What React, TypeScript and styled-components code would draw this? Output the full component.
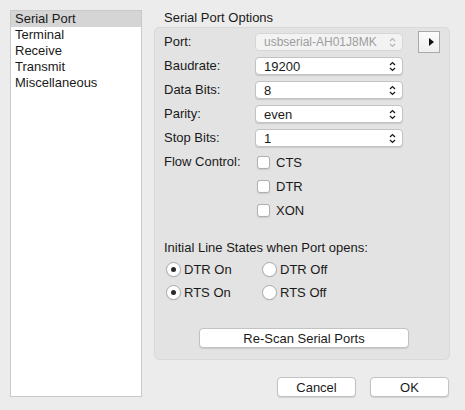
import React from "react";
import styled, { createGlobalStyle } from "styled-components";

const Global = createGlobalStyle`
  html, body { margin: 0; padding: 0; background: #ececec; }
  body { font-family: "Liberation Sans", Arial, sans-serif; font-size: 13px; color: #1a1a1a; }
  * { box-sizing: border-box; }
`;

const Window = styled.div`
  width: 465px;
  height: 410px;
  background: #ececec;
  padding: 10px 15px 0 10px;
  display: flex;
  gap: 12px;
`;

const Sidebar = styled.div`
  width: 132px;
  height: 387px;
  background: #fff;
  border: 1px solid #c9c9c9;
  display: flex;
  flex-direction: column;
`;

const SideItem = styled.div<{ $selected?: boolean }>`
  height: 16px;
  line-height: 16px;
  padding-left: 4px;
  background: ${(p) => (p.$selected ? "#d5d5d5" : "transparent")};
  white-space: nowrap;
`;

const Main = styled.div`
  width: 296px;
  display: flex;
  flex-direction: column;
`;

const Title = styled.div`
  height: 17px;
  line-height: 16px;
  padding-left: 10px;
  flex: none;
`;

const Group = styled.div`
  height: 333px;
  flex: none;
  background: #e3e3e3;
  border: 1px solid #d9d9d9;
  border-radius: 5px;
  padding: 5px 0 0 9px;
  display: flex;
  flex-direction: column;
`;

const FormGrid = styled.div`
  display: grid;
  grid-template-columns: 91px 148px 37px;
  row-gap: 6px;
  align-items: center;
`;

const Label = styled.div`
  height: 18px;
  line-height: 18px;
  white-space: nowrap;
`;

const Popup = styled.div<{ $disabled?: boolean }>`
  height: 18px;
  border-radius: 4px;
  background: ${(p) => (p.$disabled ? "#f3f3f3" : "#fff")};
  border: 1px solid ${(p) => (p.$disabled ? "#d6d6d6" : "#c3c3c3")};
  box-shadow: ${(p) => (p.$disabled ? "none" : "0 1px 1px rgba(0,0,0,0.12)")};
  color: ${(p) => (p.$disabled ? "#9d9d9d" : "#1a1a1a")};
  display: flex;
  align-items: center;
  justify-content: space-between;
  padding: 0 6px 0 8px;
  font-size: ${(p) => (p.$disabled ? "12px" : "13px")};
  white-space: nowrap;
`;

const ArrowButton = styled.div`
  justify-self: end;
  width: 22px;
  height: 22px;
  margin: -2px 0;
  border: 1px solid #a9a9a9;
  background: linear-gradient(#fbfbfb, #efefef);
  display: flex;
  align-items: center;
  justify-content: center;
  padding-left: 4px;
`;

const CheckRow = styled.div`
  height: 18px;
  display: flex;
  align-items: center;
  gap: 6px;
  padding-left: 2px;
`;

const Checkbox = styled.span`
  width: 13px;
  height: 13px;
  border-radius: 3px;
  background: #fff;
  border: 1px solid #b0b0b0;
  box-shadow: 0 0.5px 1px rgba(0,0,0,0.1);
`;

const Section = styled.div`
  margin-top: 21px;
  line-height: 16px;
  white-space: nowrap;
`;

const RadioGrid = styled.div`
  display: grid;
  grid-template-columns: 96px 100px;
  row-gap: 7px;
  margin-top: 5px;
  padding-left: 2px;
`;

const RadioItem = styled.div`
  display: flex;
  align-items: center;
  gap: 3px;
  height: 16px;
  white-space: nowrap;
`;

const Radio = styled.span<{ $on?: boolean }>`
  width: 15px;
  height: 15px;
  border-radius: 50%;
  background: #fff;
  border: 1px solid #ababab;
  box-shadow: 0 0.5px 1px rgba(0,0,0,0.1);
  display: flex;
  align-items: center;
  justify-content: center;
  &::after {
    content: "";
    width: 5px;
    height: 5px;
    border-radius: 50%;
    background: ${(p) => (p.$on ? "#2a2a2a" : "transparent")};
  }
`;

const PushButton = styled.div<{ $w: number }>`
  width: ${(p) => p.$w}px;
  height: 20px;
  border-radius: 4px;
  background: #fff;
  border: 1px solid #c2c2c2;
  box-shadow: 0 1px 1px rgba(0,0,0,0.12);
  display: flex;
  align-items: center;
  justify-content: center;
  white-space: nowrap;
`;

const RescanWrap = styled.div`
  margin-top: 28px;
  display: flex;
  justify-content: center;
  padding-right: 5px;
`;

const Footer = styled.div`
  margin-top: 17px;
  display: flex;
  justify-content: flex-end;
  gap: 14px;
  padding-right: 1px;
`;

const Chevrons = () => (
  <svg width="7" height="11" viewBox="0 0 7 11">
    <path d="M1 4 L3.5 1.5 L6 4 M1 7 L3.5 9.5 L6 7" fill="none" stroke="currentColor" strokeWidth="1.2" />
  </svg>
);

const Triangle = () => (
  <svg width="5" height="8" viewBox="0 0 5 8">
    <path d="M0 0 L5 4 L0 8 Z" fill="#111" />
  </svg>
);

const rows: [string, string][] = [
  ["Baudrate:", "19200"],
  ["Data Bits:", "8"],
  ["Parity:", "even"],
  ["Stop Bits:", "1"],
];

export default function App() {
  return (
    <>
      <Global />
      <Window>
        <Sidebar>
          <SideItem $selected>Serial Port</SideItem>
          <SideItem>Terminal</SideItem>
          <SideItem>Receive</SideItem>
          <SideItem>Transmit</SideItem>
          <SideItem>Miscellaneous</SideItem>
        </Sidebar>
        <Main>
          <Title>Serial Port Options</Title>
          <Group>
            <FormGrid>
              <Label>Port:</Label>
              <Popup $disabled>
                <span>usbserial-AH01J8MK</span>
                <span style={{ color: "#b5b5b5", display: "flex" }}><Chevrons /></span>
              </Popup>
              <ArrowButton><Triangle /></ArrowButton>
              {rows.map(([l, v]) => (
                <React.Fragment key={l}>
                  <Label>{l}</Label>
                  <Popup>
                    <span>{v}</span>
                    <span style={{ display: "flex" }}><Chevrons /></span>
                  </Popup>
                  <span />
                </React.Fragment>
              ))}
              <Label>Flow Control:</Label>
              <CheckRow><Checkbox />CTS</CheckRow>
              <span />
              <span />
              <CheckRow><Checkbox />DTR</CheckRow>
              <span />
              <span />
              <CheckRow><Checkbox />XON</CheckRow>
              <span />
            </FormGrid>
            <Section>Initial Line States when Port opens:</Section>
            <RadioGrid>
              <RadioItem><Radio $on />DTR On</RadioItem>
              <RadioItem><Radio />DTR Off</RadioItem>
              <RadioItem><Radio $on />RTS On</RadioItem>
              <RadioItem><Radio />RTS Off</RadioItem>
            </RadioGrid>
            <RescanWrap>
              <PushButton $w={210}>Re-Scan Serial Ports</PushButton>
            </RescanWrap>
          </Group>
          <Footer>
            <PushButton $w={79}>Cancel</PushButton>
            <PushButton $w={79}>OK</PushButton>
          </Footer>
        </Main>
      </Window>
    </>
  );
}
